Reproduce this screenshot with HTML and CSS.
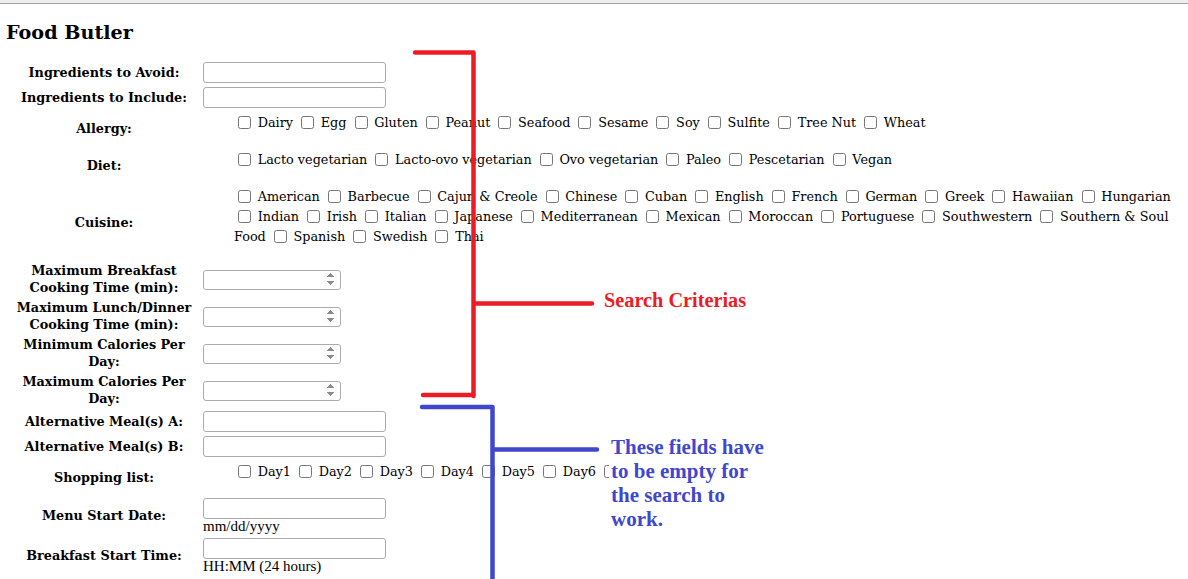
FILE: index.html
```html
<!DOCTYPE html>
<html lang="en">
<head>
<meta charset="utf-8">
<title>Food Butler</title>
<link rel="stylesheet" href="styles.css">
</head>
<body>
<div class="topbar"></div>
<main class="page">
  <h2 class="title">Food Butler</h2>
  <form class="criteria">
    <div class="label">Ingredients to Avoid:</div>
    <div class="field"><input type="text" class="text-input"></div>

    <div class="label">Ingredients to Include:</div>
    <div class="field"><input type="text" class="text-input"></div>

    <div class="label">Allergy:</div>
    <div class="field field-options"><div class="options">
      <label><input type="checkbox"> Dairy</label>
      <label><input type="checkbox"> Egg</label>
      <label><input type="checkbox"> Gluten</label>
      <label><input type="checkbox"> Peanut</label>
      <label><input type="checkbox"> Seafood</label>
      <label><input type="checkbox"> Sesame</label>
      <label><input type="checkbox"> Soy</label>
      <label><input type="checkbox"> Sulfite</label>
      <label><input type="checkbox"> Tree Nut</label>
      <label><input type="checkbox"> Wheat</label>
    </div></div>

    <div class="label">Diet:</div>
    <div class="field field-options"><div class="options">
      <label><input type="checkbox"> Lacto vegetarian</label>
      <label><input type="checkbox"> Lacto-ovo vegetarian</label>
      <label><input type="checkbox"> Ovo vegetarian</label>
      <label><input type="checkbox"> Paleo</label>
      <label><input type="checkbox"> Pescetarian</label>
      <label><input type="checkbox"> Vegan</label>
    </div></div>

    <div class="label">Cuisine:</div>
    <div class="field field-options"><div class="options">
      <label><input type="checkbox"> American</label>
      <label><input type="checkbox"> Barbecue</label>
      <label><input type="checkbox"> Cajun &amp; Creole</label>
      <label><input type="checkbox"> Chinese</label>
      <label><input type="checkbox"> Cuban</label>
      <label><input type="checkbox"> English</label>
      <label><input type="checkbox"> French</label>
      <label><input type="checkbox"> German</label>
      <label><input type="checkbox"> Greek</label>
      <label><input type="checkbox"> Hawaiian</label>
      <label><input type="checkbox"> Hungarian</label>
      <label><input type="checkbox"> Indian</label>
      <label><input type="checkbox"> Irish</label>
      <label><input type="checkbox"> Italian</label>
      <label><input type="checkbox"> Japanese</label>
      <label><input type="checkbox"> Mediterranean</label>
      <label><input type="checkbox"> Mexican</label>
      <label><input type="checkbox"> Moroccan</label>
      <label><input type="checkbox"> Portuguese</label>
      <label><input type="checkbox"> Southwestern</label>
      <label><input type="checkbox"> Southern &amp; Soul Food</label>
      <label><input type="checkbox"> Spanish</label>
      <label><input type="checkbox"> Swedish</label>
      <label><input type="checkbox"> Thai</label>
    </div></div>

    <div class="label">Maximum Breakfast<br>Cooking Time (min):</div>
    <div class="field"><input type="number" class="number-input"></div>

    <div class="label">Maximum Lunch/Dinner<br>Cooking Time (min):</div>
    <div class="field"><input type="number" class="number-input"></div>

    <div class="label">Minimum Calories Per<br>Day:</div>
    <div class="field"><input type="number" class="number-input"></div>

    <div class="label">Maximum Calories Per<br>Day:</div>
    <div class="field"><input type="number" class="number-input"></div>

    <div class="label">Alternative Meal(s) A:</div>
    <div class="field"><input type="text" class="text-input"></div>

    <div class="label">Alternative Meal(s) B:</div>
    <div class="field"><input type="text" class="text-input"></div>

    <div class="label">Shopping list:</div>
    <div class="field field-options"><div class="options">
      <label><input type="checkbox"> Day1</label>
      <label><input type="checkbox"> Day2</label>
      <label><input type="checkbox"> Day3</label>
      <label><input type="checkbox"> Day4</label>
      <label><input type="checkbox"> Day5</label>
      <label><input type="checkbox"> Day6</label>
      <label><input type="checkbox"> Day7</label>
    </div></div>

    <div class="label">Menu Start Date:</div>
    <div class="field field-stack"><input type="text" class="text-input"><span class="hint">mm/dd/yyyy</span></div>

    <div class="label">Breakfast Start Time:</div>
    <div class="field field-stack"><input type="text" class="text-input"><span class="hint">HH:MM (24 hours)</span></div>
  </form>
</main>

<svg class="marks" width="1188" height="579" viewBox="0 0 1188 579" aria-hidden="true">
  <g class="mark-red">
    <path d="M415 52.5 H473.5 V396 M423 395 H473.5 M473.5 303.5 H592"/>
  </g>
  <g class="mark-blue">
    <path d="M422 407 H492.5 V585 M492.5 449.5 H597"/>
  </g>
</svg>
<p class="note note-red">Search Criterias</p>
<p class="note note-blue">These fields have<br>to be empty for<br>the search to<br>work.</p>
</body>
</html>
```

FILE: styles.css
```css
* {
  box-sizing: border-box;
}

html,
body {
  margin: 0;
  padding: 0;
  background: #fff;
}

body {
  position: relative;
  width: 1188px;
  height: 579px;
  overflow: hidden;
  font-family: "DejaVu Serif", serif;
  color: #000;
}

.topbar {
  height: 4px;
  background: #efeeec;
  border-bottom: 1px solid #a0a0a0;
}

.page {
  padding: 0 6px;
}

.title {
  font: bold 19.2px/22.4px "DejaVu Serif", serif;
  margin: 18px 0 17px;
}

.criteria {
  display: grid;
  grid-template-columns: 192px 1fr;
  gap: 2px;
  margin: 0 2px;
}

.label {
  padding: 1px;
  display: flex;
  align-items: center;
  justify-content: center;
  text-align: center;
  font: bold 12.8px/16.5px "DejaVu Serif", serif;
}

.field {
  padding: 1px;
  display: flex;
  align-items: center;
}

.field-options {
  display: block;
}

.field-stack {
  flex-direction: column;
  align-items: flex-start;
  justify-content: center;
}

.text-input,
.number-input {
  height: 21px;
  border: 1px solid #ababab;
  border-radius: 3px;
  padding: 1px 2px;
  font: 13px "DejaVu Sans", sans-serif;
  background: #fff;
  margin: 0;
}

.text-input {
  width: 183px;
}

.number-input {
  width: 138px;
  height: 20px;
}

.number-input::-webkit-inner-spin-button {
  opacity: 1;
}

.options {
  padding: 1px 0 12px 31px;
  font: 12.8px/20px "DejaVu Serif", serif;
}

.options input {
  margin: 3px 2.6px 3px 4px;
  width: 13px;
  height: 13px;
  vertical-align: top;
}

.hint {
  font: 15px/16px "Liberation Serif", serif;
  margin-top: -1px;
}

.marks {
  position: absolute;
  left: 0;
  top: 0;
  pointer-events: none;
}

.marks path {
  fill: none;
  stroke-width: 4.5;
  stroke-linecap: round;
  stroke-linejoin: round;
}

.mark-red path {
  stroke: #ed1c24;
}

.mark-blue path {
  stroke: #3f48cc;
}

.note {
  position: absolute;
  margin: 0;
  font-family: "Liberation Serif", serif;
  font-weight: bold;
}

.note-red {
  left: 604px;
  top: 289px;
  font-size: 20.3px;
  line-height: 23px;
  color: #ed1c24;
}

.note-blue {
  left: 609px;
  top: 435px;
  padding-left: 2px;
  width: 170px;
  font-size: 21px;
  line-height: 24px;
  color: #3f48cc;
  background: #fff;
}
```
